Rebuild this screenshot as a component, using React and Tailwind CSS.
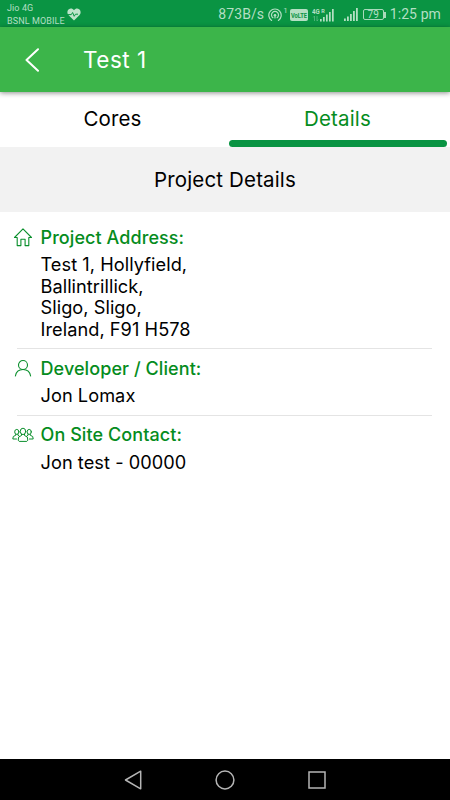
import { useState } from "react";

const HomeIcon = () => (
  <svg width="20" height="20" viewBox="0 0 20 20" fill="none" stroke="#0a8f2c" strokeWidth="1.100" strokeLinejoin="round">
    <path d="M1.500 10.500 10 1.800 18.500 10.500H15.800V18.600H12.100V12.200H7.900V18.600H4.200V10.500Z" />
  </svg>
);

const UserIcon = () => (
  <svg width="20" height="20" viewBox="0 0 20 20" fill="none" stroke="#0a8f2c" strokeWidth="1.100" strokeLinecap="round">
    <circle cx="10" cy="7" r="4.500" />
    <path d="M2.400 18C3 14 6 11.500 10 11.500s7 2.500 7.600 6.500" />
  </svg>
);

const GroupIcon = () => (
  <svg width="22" height="16" viewBox="0 0 22 16" fill="none" stroke="#0a8f2c" strokeWidth="1" strokeLinecap="round" strokeLinejoin="round">
    <ellipse cx="11" cy="4.400" rx="2.700" ry="3.200" />
    <path d="M9.500 7.200v1.300L6.700 10 6.200 13.200 7.200 14.400H14.800L15.800 13.200 15.300 10 12.500 8.500V7.200" />
    <ellipse cx="4.800" cy="4.900" rx="2.100" ry="2.500" />
    <path d="M3.800 7.200v1L1.300 9.500.8 12H4.500M5.900 7.200v1l1.100.7" />
    <ellipse cx="17.200" cy="4.900" rx="2.100" ry="2.500" />
    <path d="M18.200 7.200v1l2.500 1.300.5 2.500H17.500M16.100 7.200v1l-1.100.7" />
  </svg>
);

const HeartIcon = () => (
  <svg width="14" height="13" viewBox="0 0 14 13">
    <path d="M7 12.500 1.400 6.900C-.2 5.200.1 2.500 1.900 1.200 3.600.1 5.800.6 7 2.300 8.200.6 10.400.1 12.100 1.200c1.800 1.300 2.100 4 .5 5.700Z" fill="#bde3ca" />
    <path d="M0 6.600H4.300L5.600 4.500 7.200 8.300 8.500 6.200H11" fill="none" stroke="#0a9443" strokeWidth="1" />
  </svg>
);

const HotspotIcon = () => (
  <svg width="14" height="14" viewBox="0 0 14 14" fill="none" stroke="#b4dfc3" strokeWidth="1.200" strokeLinecap="round">
    <path d="M3.600 12.400a6.200 6.200 0 1 1 6.800 0M4.900 9.700a3.500 3.500 0 1 1 4.200 0" />
    <circle cx="7" cy="7.200" r="1.300" fill="#b4dfc3" stroke="none" />
    <path d="M7 8.500v1.500" />
  </svg>
);

const VolteIcon = () => (
  <svg width="18" height="12" viewBox="0 0 18 12">
    <rect width="18" height="12" rx="2" fill="#b4dfc3" />
    <text x="12.500" y="8.800" transform="scale(.72 1)" textAnchor="middle" fontSize="8" fontWeight="700" fontFamily="Roboto, sans-serif" fill="#0a9443">VoLTE</text>
  </svg>
);

const SignalIcon = () => (
  <svg width="14" height="13" viewBox="0 0 14 13" fill="#b4dfc3">
    <rect x="0" y="10.500" width="1.800" height="2.500" />
    <rect x="3" y="8.500" width="1.800" height="4.500" />
    <rect x="6" y="6" width="1.800" height="7" />
    <rect x="9" y="3" width="1.800" height="10" />
    <rect x="12" y="0" width="1.800" height="13" />
  </svg>
);

const NetworkIcon = () => (
  <svg width="22" height="15" viewBox="0 0 22 15" fill="#b4dfc3">
    <text x="0" y="7" transform="scale(.82 1)" fontSize="7.500" fontWeight="700" fontFamily="Roboto, sans-serif">4G</text>
    <text x="9.200" y="6" fontSize="5.500" fontWeight="700" fontFamily="Roboto, sans-serif">R</text>
    <path d="M2.500 9v5M1.300 10.400 2.500 9M5 9v5M6.200 12.600 5 14" stroke="#5db985" strokeWidth=".8" fill="none" />
    <rect x="8" y="12" width="1.700" height="2.500" />
    <rect x="11" y="10" width="1.700" height="4.500" />
    <rect x="14" y="7.500" width="1.700" height="7" />
    <rect x="17" y="5" width="1.700" height="9.500" />
    <rect x="20" y="2" width="1.700" height="12.500" />
  </svg>
);

const details = [
  {
    id: "address",
    icon: <HomeIcon />,
    title: "Project Address:",
    lines: ["Test 1, Hollyfield,", "Ballintrillick,", "Sligo, Sligo,", "Ireland, F91 H578"],
  },
  {
    id: "client",
    icon: <UserIcon />,
    title: "Developer / Client:",
    lines: ["Jon Lomax"],
  },
  {
    id: "contact",
    icon: <GroupIcon />,
    title: "On Site Contact:",
    lines: ["Jon test - 00000"],
  },
];

const StatusBar = () => (
  <div className="flex h-[27px] shrink-0 bg-[#0a9443] pl-[7px] pr-[9px] font-[Roboto,sans-serif] text-[#b4dfc3]">
    <div className="pt-[2px] text-[9px] leading-[12.500px] tracking-[0.1px] whitespace-nowrap">
      <p>Jio 4G</p>
      <p>BSNL MOBILE</p>
    </div>
    <div className="ml-[2px] pt-[8px]">
      <HeartIcon />
    </div>
    <div className="ml-auto flex items-center pt-[2px]">
      <span className="text-[14px] tracking-[0.1px]">873B/s</span>
      <span className="ml-[4px]"><HotspotIcon /></span>
      <span className="mb-[7px] ml-px text-[8px] leading-none">1</span>
      <span className="mr-[4px] ml-[2px]"><VolteIcon /></span>
      <NetworkIcon />
      <span className="ml-[10px]"><SignalIcon /></span>
      <span className="ml-[5px] flex h-[11px] w-[21px] items-center justify-center rounded-[2px] border border-[#a9dabb] pt-px text-[10px] leading-none">
        79
      </span>
      <span className="h-[6px] w-[2px] bg-[#a9dabb]" />
      <span className="ml-[4px] text-[14px] tracking-[0.1px]">1:25 pm</span>
    </div>
  </div>
);

const NavBar = () => (
  <div className="flex h-[41px] shrink-0 items-center justify-between bg-black px-[124px]">
    <svg width="18" height="20" viewBox="0 0 18 20" fill="none" stroke="#b5b5b5" strokeWidth="1.500" strokeLinejoin="round">
      <path d="M1.500 10 16.700 1.200V18.800Z" />
    </svg>
    <svg width="20" height="20" viewBox="0 0 20 20" fill="none" stroke="#b5b5b5" strokeWidth="1.500">
      <circle cx="10" cy="10" r="8.900" />
    </svg>
    <svg width="18" height="18" viewBox="0 0 18 18" fill="none" stroke="#b5b5b5" strokeWidth="1.500">
      <rect x="1" y="1" width="16" height="16" />
    </svg>
  </div>
);

const App = () => {
  const [activeTab, setActiveTab] = useState("Details");

  return (
    <div className="flex h-[800px] w-[450px] flex-col bg-white font-[Inter,sans-serif] text-black">
      <StatusBar />

      <header className="z-10 flex h-[65px] shrink-0 items-center bg-[#3cb54a] pl-[24px] text-white shadow-[0_1px_5px_rgba(0,0,0,0.45)]">
        <button aria-label="Back">
          <svg width="16" height="24" viewBox="0 0 16 24" fill="none" stroke="white" strokeWidth="2" strokeLinecap="round" strokeLinejoin="round">
            <path d="M14 1.200 2.500 12 14 22.800" />
          </svg>
        </button>
        <h1 className="ml-[43px] text-[22.500px] tracking-[0.5px]">Test 1</h1>
      </header>

      <div className="flex h-[55px] shrink-0">
        {["Cores", "Details"].map((tab) => (
          <button
            key={tab}
            onClick={() => setActiveTab(tab)}
            className={`flex flex-1 flex-col justify-end text-[20.500px] leading-[28px] tracking-[0.150px] ${
              activeTab === tab ? "text-[#058c20]" : "text-black"
            }`}
          >
            <span className="w-full pb-[7px] text-center">{tab}</span>
            <span className={`mr-[3.500px] ml-[3.500px] h-[7px] self-stretch rounded-full ${activeTab === tab ? "bg-[#0a9443]" : ""}`} />
          </button>
        ))}
      </div>

      <h2 className="flex h-[65px] shrink-0 items-center justify-center bg-[#f2f2f2] pt-px text-[20.500px] tracking-[0.150px]">
        Project Details
      </h2>

      <main className="flex-1 pt-[12px]">
        {details.map((item, index) => (
          <section key={item.id}>
            {index > 0 && <div className="mr-[18px] mb-[6px] ml-[17px] h-px bg-[#e4e4e4]" />}
            <div className="flex h-[26px] items-center text-[18px] font-medium tracking-[0.080px] text-[#058c20]">
              <span className="mr-[6.500px] ml-[12px] flex w-[22px] justify-center">{item.icon}</span>
              <h3>{item.title}</h3>
            </div>
            <div className="pt-[4px] pb-[8px] pl-[40.500px] text-[18.200px] leading-[21.600px] tracking-[0.050px]">
              {item.lines.map((line) => (
                <p key={line}>{line}</p>
              ))}
            </div>
          </section>
        ))}
      </main>

      <NavBar />
    </div>
  );
};

export default App;
